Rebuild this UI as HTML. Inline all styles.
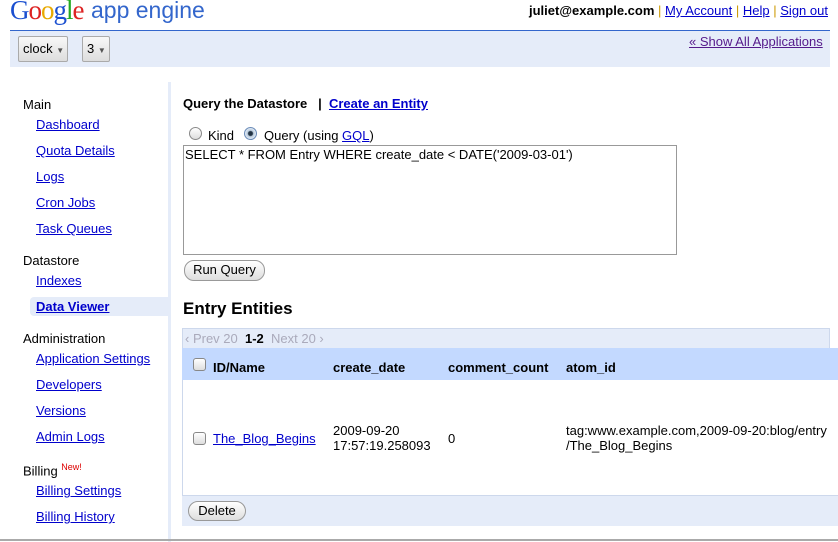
<!DOCTYPE html>
<html><head><meta charset="utf-8"><style>
body{margin:0;width:838px;height:541px;background:#fff;font-family:"Liberation Sans",Arial,sans-serif;font-size:13px;color:#000;position:relative;overflow:hidden}
.a{position:absolute;white-space:nowrap}
a{color:#00c;text-decoration:underline}
.btn{position:absolute;border:1px solid #999;border-radius:10px;background:linear-gradient(#fff,#ddd);font-size:13px;text-align:center;line-height:18px}
.cb{position:absolute;width:11px;height:11px;border:1px solid #888;border-radius:3px;background:linear-gradient(#fff,#ddd)}
</style></head><body>
<div class="a" style="left:10px;top:-5px;font-family:'Liberation Serif',serif;font-size:27px;letter-spacing:-1px"><span style="color:#1a4fd0">G</span><span style="color:#d22">o</span><span style="color:#e8a900">o</span><span style="color:#1a4fd0">g</span><span style="color:#2a2">l</span><span style="color:#d22">e</span></div>
<div class="a" style="left:91px;top:-3px;font-size:23px;color:#3366cc">app engine</div>
<div class="a" style="left:529px;top:3px"><b>juliet@example.com</b> <span style="color:#c90">|</span> <a href="#">My Account</a> <span style="color:#c90">|</span> <a href="#">Help</a> <span style="color:#c90">|</span> <a href="#">Sign out</a></div>
<div class="a" style="left:10px;top:30px;width:820px;height:36px;background:#e5ecf9;border-top:1px solid #36c"></div>
<div class="a" style="left:18px;top:36px;width:44px;height:24px;border:1px solid #aaa;border-radius:2px;background:linear-gradient(#f8f8f8,#ddd);line-height:24px;padding-left:4px;font-size:13px">clock <span style="font-size:8px;color:#555">▼</span></div>
<div class="a" style="left:82px;top:36px;width:22px;height:24px;border:1px solid #aaa;border-radius:2px;background:linear-gradient(#f8f8f8,#ddd);line-height:24px;padding-left:4px">3 <span style="font-size:8px;color:#555">▼</span></div>
<div class="a" style="left:689px;top:34px"><a href="#" style="color:#551a8b">« Show All Applications</a></div>
<div class="a" style="left:168px;top:82px;width:3px;height:460px;background:#e5ecf9"></div>
<div class="a" style="left:30px;top:297px;width:138px;height:19px;background:#e5ecf9;border-radius:4px 0 0 4px"></div>
<div class="a" style="left:23px;top:97px">Main</div>
<div class="a" style="left:36px;top:117px"><a href="#">Dashboard</a></div>
<div class="a" style="left:36px;top:143px"><a href="#">Quota Details</a></div>
<div class="a" style="left:36px;top:169px"><a href="#">Logs</a></div>
<div class="a" style="left:36px;top:195px"><a href="#">Cron Jobs</a></div>
<div class="a" style="left:36px;top:221px"><a href="#">Task Queues</a></div>
<div class="a" style="left:23px;top:253px">Datastore</div>
<div class="a" style="left:36px;top:273px"><a href="#">Indexes</a></div>
<div class="a" style="left:36px;top:299px"><a href="#" style="font-weight:bold">Data Viewer</a></div>
<div class="a" style="left:23px;top:331px">Administration</div>
<div class="a" style="left:36px;top:351px"><a href="#">Application Settings</a></div>
<div class="a" style="left:36px;top:377px"><a href="#">Developers</a></div>
<div class="a" style="left:36px;top:403px"><a href="#">Versions</a></div>
<div class="a" style="left:36px;top:429px"><a href="#">Admin Logs</a></div>
<div class="a" style="left:23px;top:462px">Billing <sup style="color:#d00;font-size:9px">New!</sup></div>
<div class="a" style="left:36px;top:483px"><a href="#">Billing Settings</a></div>
<div class="a" style="left:36px;top:509px"><a href="#">Billing History</a></div>

<div class="a" style="left:183px;top:96px"><b>Query the Datastore</b> &nbsp; <b>|</b> &nbsp;<a href="#" style="font-weight:bold">Create an Entity</a></div>
<div class="a" style="left:189px;top:127px;width:11px;height:11px;border:1px solid #888;border-radius:50%;background:linear-gradient(#fff,#ddd)"></div>
<div class="a" style="left:208px;top:128px">Kind</div>
<div class="a" style="left:244px;top:127px;width:11px;height:11px;border:1px solid #6a8bb8;border-radius:50%;background:radial-gradient(circle,#234 0 2px,#bcd 3px,#e8f0fa 6px)"></div>
<div class="a" style="left:264px;top:128px">Query (using <a href="#">GQL</a>)</div>
<div class="a" style="left:183px;top:145px;width:492px;height:108px;border:1px solid #999"></div>
<div class="a" style="left:185px;top:147px">SELECT * FROM Entry WHERE create_date &lt; DATE('2009-03-01')</div>
<div class="btn" style="left:184px;top:260px;width:79px;height:19px">Run Query</div>
<div class="a" style="left:183px;top:299px;font-size:17px;font-weight:bold">Entry Entities</div>
<div class="a" style="left:182px;top:328px;width:646px;height:20px;background:#e5ecf9;border:1px solid #cdd8ec;border-bottom:none"></div>
<div class="a" style="left:185px;top:331px;color:#aab"><span>‹ Prev 20</span> &nbsp;<b style="color:#000">1-2</b> &nbsp;<span>Next 20 ›</span></div>
<div class="a" style="left:182px;top:348px;width:656px;height:32px;background:#c3d9ff"></div>
<div class="cb" style="left:193px;top:358px"></div>
<div class="a" style="left:213px;top:360px;font-weight:bold">ID/Name</div>
<div class="a" style="left:333px;top:360px;font-weight:bold">create_date</div>
<div class="a" style="left:448px;top:360px;font-weight:bold">comment_count</div>
<div class="a" style="left:566px;top:360px;font-weight:bold">atom_id</div>
<div class="a" style="left:182px;top:380px;width:656px;height:115px;border-left:1px solid #cdd8ec"></div>
<div class="cb" style="left:193px;top:432px"></div>
<div class="a" style="left:213px;top:431px"><a href="#">The_Blog_Begins</a></div>
<div class="a" style="left:333px;top:423px;line-height:15px">2009-09-20<br>17:57:19.258093</div>
<div class="a" style="left:448px;top:431px">0</div>
<div class="a" style="left:566px;top:423px;line-height:15px">tag:www.example.com,2009-09-20:blog/entry<br>/The_Blog_Begins</div>
<div class="a" style="left:182px;top:495px;width:656px;height:30px;background:#e5ecf9;border-top:1px solid #cdd8ec"></div>
<div class="btn" style="left:188px;top:501px;width:56px;height:18px">Delete</div>
<div class="a" style="left:0;top:539px;width:838px;height:2px;background:#aaa"></div>
</body></html>
